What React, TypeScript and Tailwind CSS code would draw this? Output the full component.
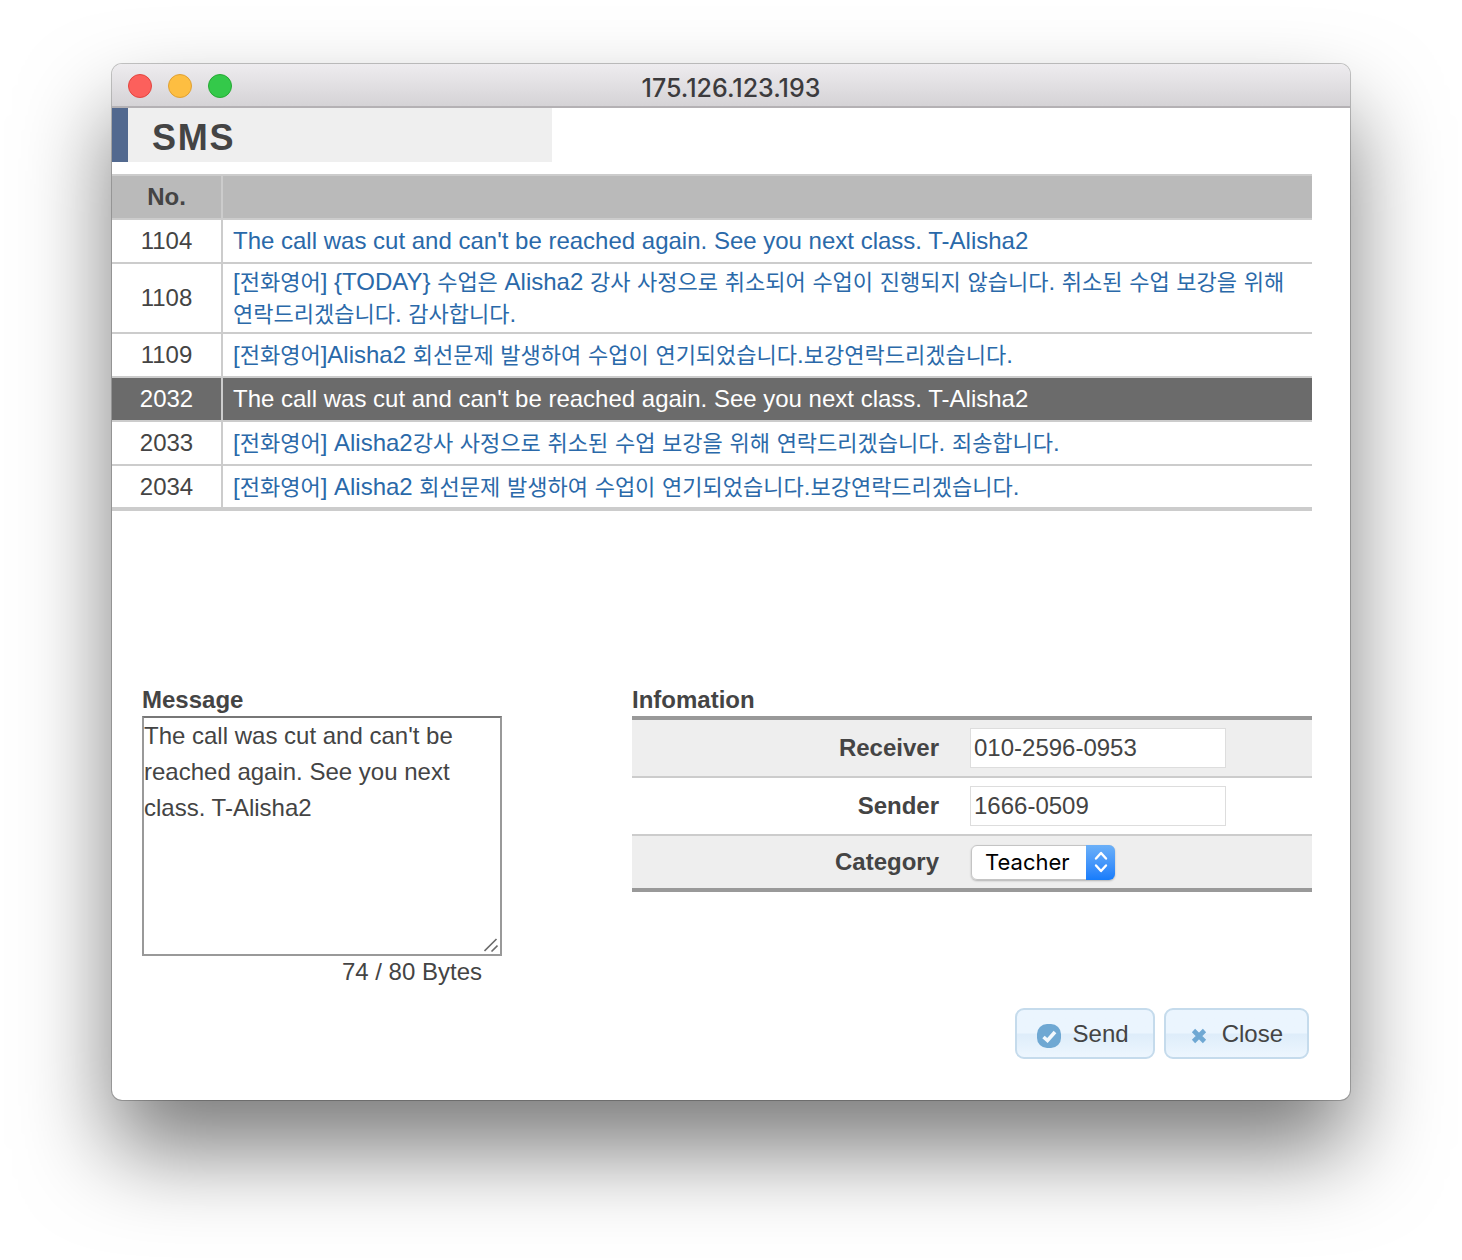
import { Fragment, useState } from "react";

type Template = { no: string; text: string };

const templates: Template[] = [
  { no: "1104", text: "The call was cut and can't be reached again. See you next class. T-Alisha2" },
  {
    no: "1108",
    text: "[전화영어] {TODAY} 수업은 Alisha2 강사 사정으로 취소되어 수업이 진행되지 않습니다. 취소된 수업 보강을 위해 연락드리겠습니다. 감사합니다.",
  },
  { no: "1109", text: "[전화영어]Alisha2 회선문제 발생하여 수업이 연기되었습니다.보강연락드리겠습니다." },
  { no: "2032", text: "The call was cut and can't be reached again. See you next class. T-Alisha2" },
  { no: "2033", text: "[전화영어] Alisha2강사 사정으로 취소된 수업 보강을 위해 연락드리겠습니다. 죄송합니다." },
  { no: "2034", text: "[전화영어] Alisha2 회선문제 발생하여 수업이 연기되었습니다.보강연락드리겠습니다." },
];

// Hangul glyphs are set slightly smaller than the Latin text around them.
function MixedText({ text }: { text: string }) {
  return (
    <>
      {text.split(/([가-힣]+)/).map((part, i) =>
        i % 2 === 1 ? (
          <span key={i} className="text-[22px] leading-none font-normal">
            {part}
          </span>
        ) : (
          <Fragment key={i}>{part}</Fragment>
        ),
      )}
    </>
  );
}

function TitleBar() {
  return (
    <header className="relative flex h-11 items-center justify-center border-b-2 border-[#b4b1b4] bg-linear-to-b from-[#eeecef] to-[#d5d3d6]">
      <div className="absolute top-2.5 left-4 flex gap-4">
        <button aria-label="Close window" className="size-6 rounded-full border border-[#e2453f] bg-[#fc605c]" />
        <button aria-label="Minimize window" className="size-6 rounded-full border border-[#dfa033] bg-[#fdbe41]" />
        <button aria-label="Zoom window" className="size-6 rounded-full border border-[#26a934] bg-[#34c94a]" />
      </div>
      <h1 className="pt-1.5 font-[Inter,sans-serif] text-[25px] leading-7 font-medium text-[#3c3b3d]">
        175.126.123.193
      </h1>
    </header>
  );
}

function TemplateTable({ selected, onSelect }: { selected: string; onSelect: (t: Template) => void }) {
  return (
    <table className="w-full border-separate border-spacing-0 border-t-2 border-b-2 border-[#cccccc]">
      <thead>
        <tr className="bg-[#bababa]">
          <th className="h-11 w-[111px] border-r-2 border-b-2 border-[#cccccc] p-0 font-bold">No.</th>
          <th aria-label="Message" className="border-b-2 border-[#cccccc]" />
        </tr>
      </thead>
      <tbody>
        {templates.map((t) => {
          const active = t.no === selected;
          return (
            <tr key={t.no} className={active ? "h-11 bg-[#6b6b6b] text-white" : "h-11 text-[#2a69a9] last:h-[43px]"}>
              <td
                className={
                  active
                    ? "border-r-2 border-b-2 border-[#cccccc] p-0 text-center"
                    : "border-r-2 border-b-2 border-[#cccccc] p-0 text-center text-[#444444]"
                }
              >
                {t.no}
              </td>
              <td className="border-b-2 border-[#cccccc] py-0.5 pr-1 pl-[10px]">
                <a
                  href="#message"
                  className="block break-keep"
                  onClick={(e) => {
                    e.preventDefault();
                    onSelect(t);
                  }}
                >
                  <MixedText text={t.text} />
                </a>
              </td>
            </tr>
          );
        })}
      </tbody>
    </table>
  );
}

function CategorySelect() {
  return (
    <div className="relative ml-px inline-flex rounded-md shadow-[0_1px_2px_rgba(0,0,0,0.25)]">
      <select
        id="category"
        className="h-[35px] w-36 appearance-none rounded-md border border-[#c4c4c4] bg-white pl-[13px] font-[Inter,sans-serif] text-[22px] leading-7 text-black"
      >
        <option>Teacher</option>
        <option>Student</option>
      </select>
      <span className="pointer-events-none absolute inset-y-0 right-0 flex w-[29px] items-center justify-center rounded-r-md bg-linear-to-b from-[#6bb0f8] to-[#157cfb]">
        <svg width="16" height="24" viewBox="0 0 16 24" fill="none" stroke="white" strokeWidth="2.4" strokeLinecap="round" strokeLinejoin="round">
          <path d="M3 8.5 8 3l5 5.500M3 15.500 8 21l5-5.500" />
        </svg>
      </span>
    </div>
  );
}

const buttonStyle =
  "flex h-[51px] items-center rounded-[9px] border-2 border-[#c5dbec] bg-linear-to-b from-[#ebf5fe] from-48% via-[#deedfa] via-52% to-[#edf6fe]";
const labelStyle = "border-[#cccccc] p-0 pr-[31px] text-right font-bold";
const inputStyle = "block h-10 w-64 border border-[#dddddd] bg-white px-[3px]";

export default function App() {
  const [selected, setSelected] = useState("2032");
  const [message, setMessage] = useState(templates[3].text);

  return (
    <div className="min-h-screen overflow-hidden bg-white px-28 pt-16 pb-40 font-['Liberation_Sans','Noto_Sans_CJK_KR',sans-serif] text-2xl leading-8 text-[#444444]">
      <main className="rounded-[10px] bg-white shadow-[0_0_0_1px_rgba(0,0,0,0.22),0_50px_90px_rgba(0,0,0,0.52)]">
        <div className="overflow-hidden rounded-[10px] pb-[41px]">
          <TitleBar />
          <h2 className="h-[54px] w-[440px] border-l-16 border-[#52698f] bg-[#efefef] pl-6 text-4xl leading-[60px] font-bold tracking-wider">
            SMS
          </h2>
          <div className="mt-3 mr-[38px]">
            <TemplateTable
              selected={selected}
              onSelect={(t) => {
                setSelected(t.no);
                setMessage(t.text);
              }}
            />
          </div>

          <div className="mt-[173px] mr-[38px] ml-[30px] flex items-start gap-[130px]">
            <section className="w-[360px]">
              <label htmlFor="message" className="block font-bold">
                Message
              </label>
              <div className="relative">
                <textarea
                  id="message"
                  value={message}
                  onChange={(e) => setMessage(e.target.value)}
                  className="block h-60 w-full resize-none border-2 border-[#999999] border-t-[#777777] leading-9"
                />
                <svg className="pointer-events-none absolute right-1 bottom-1" width="14" height="14" viewBox="0 0 14 14" stroke="#6b6b6b" strokeWidth="1.600">
                  <path d="M0.500 13 12.500 1M7.500 13.500 13.500 7.500" />
                </svg>
              </div>
              <p className="pr-5 text-right">74 / 80 Bytes</p>
            </section>

            <section className="flex-1">
              <h3 className="font-bold">Infomation</h3>
              <table className="w-full border-separate border-spacing-0 border-y-4 border-[#999999]">
                <tbody>
                  <tr className="bg-[#eeeeee]">
                    <th scope="row" className={`${labelStyle} h-[58px] w-[338px] border-b-2`}>
                      <label htmlFor="receiver">Receiver</label>
                    </th>
                    <td className="border-b-2 border-[#cccccc] p-0">
                      <input id="receiver" className={inputStyle} defaultValue="010-2596-0953" />
                    </td>
                  </tr>
                  <tr>
                    <th scope="row" className={`${labelStyle} h-[58px] border-b-2`}>
                      <label htmlFor="sender">Sender</label>
                    </th>
                    <td className="border-b-2 border-[#cccccc] p-0">
                      <input id="sender" className={inputStyle} defaultValue="1666-0509" />
                    </td>
                  </tr>
                  <tr className="bg-[#eeeeee]">
                    <th scope="row" className={`${labelStyle} h-[52px]`}>
                      <label htmlFor="category">Category</label>
                    </th>
                    <td className="p-0 leading-none">
                      <CategorySelect />
                    </td>
                  </tr>
                </tbody>
              </table>
            </section>
          </div>

          <div className="mt-5 mr-[41px] flex justify-end gap-[9px]">
            <button className={`${buttonStyle} gap-3 pr-6 pl-5`}>
              <svg className="mt-1" width="24" height="24" viewBox="0 0 24 24">
                <rect width="24" height="24" rx="10" fill="#6fa8d3" />
                <path d="M6.500 13 10.500 16.500 18 8" fill="none" stroke="#f2f8fd" strokeWidth="3.600" />
              </svg>
              Send
            </button>
            <button className={`${buttonStyle} gap-[15px] pr-6 pl-[25px]`}>
              <svg className="mt-1" width="16" height="16" viewBox="0 0 16 16">
                <path d="M2.500 2.500 13.500 13.500M13.500 2.500 2.500 13.500" fill="none" stroke="#6fa8d3" strokeWidth="4.600" />
              </svg>
              Close
            </button>
          </div>
        </div>
      </main>
    </div>
  );
}
